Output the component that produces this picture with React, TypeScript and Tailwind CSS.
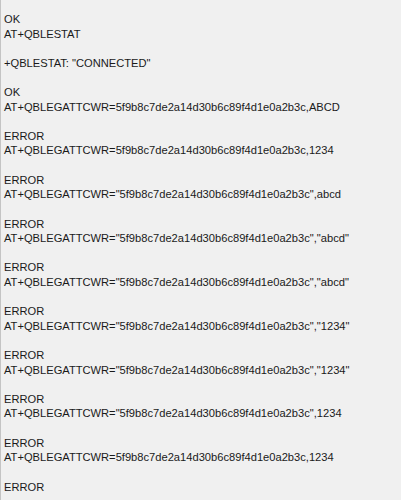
import React from "react";

const H = "5f9b8c7de2a14d30b6c89f4d1e0a2b3c";
const lines: string[] = [
  "OK",
  "AT+QBLESTAT",
  "",
  '+QBLESTAT: "CONNECTED"',
  "",
  "OK",
  `AT+QBLEGATTCWR=${H},ABCD`,
  "",
  "ERROR",
  `AT+QBLEGATTCWR=${H},1234`,
  "",
  "ERROR",
  `AT+QBLEGATTCWR="${H}",abcd`,
  "",
  "ERROR",
  `AT+QBLEGATTCWR="${H}","abcd"`,
  "",
  "ERROR",
  `AT+QBLEGATTCWR="${H}","abcd"`,
  "",
  "ERROR",
  `AT+QBLEGATTCWR="${H}","1234"`,
  "",
  "ERROR",
  `AT+QBLEGATTCWR="${H}","1234"`,
  "",
  "ERROR",
  `AT+QBLEGATTCWR="${H}",1234`,
  "",
  "ERROR",
  `AT+QBLEGATTCWR=${H},1234`,
  "",
  "ERROR",
  "",
];

export default function App() {
  return (
    <div className="w-[401px] h-[500px] overflow-hidden bg-[#f0f0f0] border-l border-[#c4c4c4] pt-[12px] pl-[3px] text-[#1a1a1a] text-[11.15px] leading-[14.62px] font-['Liberation_Sans',Arial,sans-serif]">
      {lines.map((l, i) => (
        <div key={i} className="h-[14.62px] whitespace-pre">
          {l}
        </div>
      ))}
    </div>
  );
}
